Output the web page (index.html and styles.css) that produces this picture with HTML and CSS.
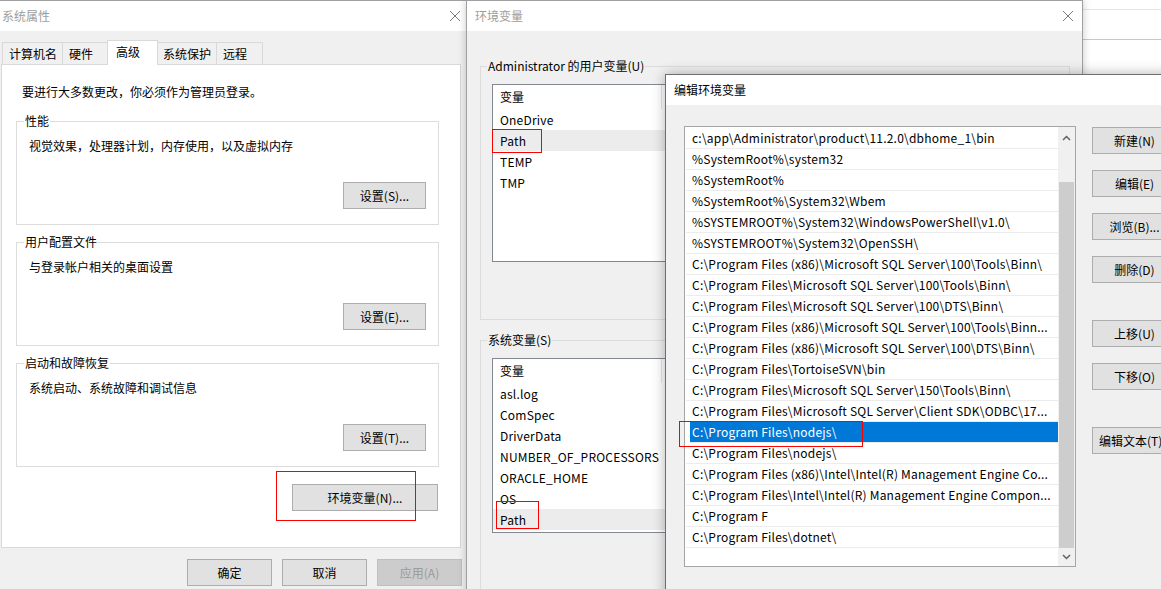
FILE: index.html
```html
<!DOCTYPE html>
<html lang="zh-CN">
<head>
    <meta charset="UTF-8">
    <meta name="viewport" content="width=device-width, initial-scale=1.0">
    <title>编辑环境变量</title>
    <link rel="stylesheet" href="styles.css">
</head>
<body>
<div class="desktop">
    <div class="bg-window">
        <div class="bg-line light"></div>
        <div class="bg-line dark"></div>
    </div>

    <!-- 系统属性 -->
    <div class="window sys-window">
        <div class="titlebar">
            <span class="title">系统属性</span>
            <svg class="close" viewBox="0 0 10 10"><path d="M0 0L10 10M10 0L0 10"/></svg>
        </div>
        <div class="tabs">
            <span class="tab">计算机名</span>
            <span class="tab">硬件</span>
            <span class="tab active">高级</span>
            <span class="tab">系统保护</span>
            <span class="tab">远程</span>
        </div>
        <div class="tab-panel">
            <p class="note">要进行大多数更改，你必须作为管理员登录。</p>
            <fieldset class="group">
                <legend>性能</legend>
                <p class="desc">视觉效果，处理器计划，内存使用，以及虚拟内存</p>
                <button class="btn group-btn">设置(S)...</button>
            </fieldset>
            <fieldset class="group">
                <legend>用户配置文件</legend>
                <p class="desc">与登录帐户相关的桌面设置</p>
                <button class="btn group-btn">设置(E)...</button>
            </fieldset>
            <fieldset class="group">
                <legend>启动和故障恢复</legend>
                <p class="desc">系统启动、系统故障和调试信息</p>
                <button class="btn group-btn">设置(T)...</button>
            </fieldset>
            <button class="btn env-btn">环境变量(N)...</button>
        </div>
        <div class="dialog-buttons">
            <button class="btn dialog-btn">确定</button>
            <button class="btn dialog-btn">取消</button>
            <button class="btn dialog-btn" disabled>应用(A)</button>
        </div>
    </div>

    <!-- 环境变量 -->
    <div class="window env-window">
        <div class="titlebar">
            <span class="title">环境变量</span>
            <svg class="close" viewBox="0 0 10 10"><path d="M0 0L10 10M10 0L0 10"/></svg>
        </div>
        <div class="env-body">
            <fieldset class="group env-group">
                <legend>Administrator 的用户变量(U)</legend>
                <div class="listview user-list">
                    <div class="lv-header"><span class="lv-col">变量</span></div>
                    <div class="lv-row">OneDrive</div>
                    <div class="lv-row selected">Path</div>
                    <div class="lv-row">TEMP</div>
                    <div class="lv-row">TMP</div>
                </div>
            </fieldset>
            <fieldset class="group env-group sys-group">
                <legend>系统变量(S)</legend>
                <div class="listview sys-list">
                    <div class="lv-header"><span class="lv-col">变量</span></div>
                    <div class="lv-row">asl.log</div>
                    <div class="lv-row">ComSpec</div>
                    <div class="lv-row">DriverData</div>
                    <div class="lv-row">NUMBER_OF_PROCESSORS</div>
                    <div class="lv-row">ORACLE_HOME</div>
                    <div class="lv-row">OS</div>
                    <div class="lv-row selected">Path</div>
                </div>
            </fieldset>
        </div>
    </div>

    <!-- 编辑环境变量 -->
    <div class="window edit-window">
        <div class="titlebar">
            <span class="title active-title">编辑环境变量</span>
        </div>
        <div class="edit-body">
            <div class="listbox">
                <div class="items">
                    <div class="item">c:\app\Administrator\product\11.2.0\dbhome_1\bin</div>
                    <div class="item">%SystemRoot%\system32</div>
                    <div class="item">%SystemRoot%</div>
                    <div class="item">%SystemRoot%\System32\Wbem</div>
                    <div class="item">%SYSTEMROOT%\System32\WindowsPowerShell\v1.0\</div>
                    <div class="item">%SYSTEMROOT%\System32\OpenSSH\</div>
                    <div class="item">C:\Program Files (x86)\Microsoft SQL Server\100\Tools\Binn\</div>
                    <div class="item">C:\Program Files\Microsoft SQL Server\100\Tools\Binn\</div>
                    <div class="item">C:\Program Files\Microsoft SQL Server\100\DTS\Binn\</div>
                    <div class="item">C:\Program Files (x86)\Microsoft SQL Server\100\Tools\Binn...</div>
                    <div class="item">C:\Program Files (x86)\Microsoft SQL Server\100\DTS\Binn\</div>
                    <div class="item">C:\Program Files\TortoiseSVN\bin</div>
                    <div class="item">C:\Program Files\Microsoft SQL Server\150\Tools\Binn\</div>
                    <div class="item">C:\Program Files\Microsoft SQL Server\Client SDK\ODBC\17...</div>
                    <div class="item selected">C:\Program Files\nodejs\</div>
                    <div class="item">C:\Program Files\nodejs\</div>
                    <div class="item">C:\Program Files (x86)\Intel\Intel(R) Management Engine Co...</div>
                    <div class="item">C:\Program Files\Intel\Intel(R) Management Engine Compon...</div>
                    <div class="item">C:\Program F</div>
                    <div class="item">C:\Program Files\dotnet\</div>
                </div>
                <div class="scrollbar">
                    <div class="arrow up"><svg viewBox="0 0 9 6"><polyline points="1,5 4.5,1.5 8,5"/></svg></div>
                    <div class="thumb"></div>
                    <div class="arrow down"><svg viewBox="0 0 9 6"><polyline points="1,1 4.5,4.5 8,1"/></svg></div>
                </div>
            </div>
            <div class="side-buttons">
                <button class="btn side-btn">新建(N)</button>
                <button class="btn side-btn">编辑(E)</button>
                <button class="btn side-btn">浏览(B)...</button>
                <button class="btn side-btn">删除(D)</button>
                <button class="btn side-btn spaced">上移(U)</button>
                <button class="btn side-btn">下移(O)</button>
                <button class="btn side-btn spaced edit-text-btn">编辑文本(T)</button>
            </div>
        </div>
    </div>

    <!-- annotations -->
    <div class="mark mark-env"></div>
    <div class="mark mark-user-path"></div>
    <div class="mark mark-sys-path"></div>
    <div class="mark mark-node"></div>
</div>
</body>
</html>
```

FILE: styles.css
```css
* {
    box-sizing: border-box;
}
body {
    margin: 0;
    font-family: "Noto Sans CJK SC", sans-serif;
    font-size: 12px;
    color: #000;
    background: #fff;
}
.desktop {
    position: relative;
    width: 1161px;
    height: 589px;
    overflow: hidden;
    background: #fff;
}
p {
    margin: 0;
}

/* window behind, top right */
.bg-window {
    position: absolute;
    left: 1070px;
    top: 0;
    width: 120px;
    height: 90px;
    background: #fff;
    padding-top: 9px;
}
.bg-line {
    height: 1px;
}
.bg-line.light {
    background: #e6e6e6;
}
.bg-line.dark {
    margin-top: 29px;
    background: #c8c8c8;
}

/* windows */
.window {
    position: absolute;
    background: #f0f0f0;
    border: 1px solid #a0a0a0;
    overflow: hidden;
}
.titlebar {
    height: 30px;
    background: #fff;
    display: flex;
    align-items: center;
    justify-content: space-between;
}
.title {
    line-height: 16px;
    color: #9d9d9d;
}
.title.active-title {
    color: #000;
}
.close {
    width: 10px;
    height: 10px;
    stroke: #7a7a7a;
    stroke-width: 1;
    fill: none;
}

.btn {
    font: inherit;
    height: 27px;
    padding: 0;
    background: #e1e1e1;
    border: 1px solid #adadad;
    color: #000;
    line-height: 25px;
    white-space: nowrap;
}
.btn:disabled {
    background: #cccccc;
    border-color: #bfbfbf;
    color: #9a9a9a;
}

/* group boxes */
.group {
    margin: 10px 0 0;
    min-width: 0;
    border: 1px solid #dcdcdc;
}
.group legend {
    padding: 0 1px;
    line-height: 14px;
}

/* 系统属性 */
.sys-window {
    left: -1px;
    top: 0;
    width: 478px;
    height: 600px;
}
.sys-window .titlebar {
    padding: 0 16px 0 2px;
}
.tabs {
    display: flex;
    align-items: flex-end;
    padding: 9px 0 0 2px;
}
.tab {
    position: relative;
    min-width: 47px;
    height: 22px;
    padding: 0 5px 0 6px;
    line-height: 21px;
    border: 1px solid #d9d9d9;
    border-bottom: none;
    margin-left: -1px;
    background: #f0f0f0;
}
.tab:first-child {
    margin-left: 0;
}
.tab.active {
    z-index: 1;
    min-width: 51px;
    height: 25px;
    margin: 0 -2px -1px -2px;
    padding: 0 5px 0 8px;
    line-height: 22px;
    background: #fff;
}
.tab.active + .tab {
    margin-left: 0;
}
.tab-panel {
    width: 460px;
    height: 484px;
    margin-left: 1px;
    padding: 19px 21px 0 14px;
    background: #fff;
    border: 1px solid #d9d9d9;
    display: flex;
    flex-direction: column;
}
.note {
    margin-left: 6px;
    line-height: 16px;
}
.tab-panel .group {
    padding: 10px 12px 15px 7px;
}
.tab-panel .group:first-of-type {
    margin-top: 14px;
}
.desc {
    margin-left: 5px;
    line-height: 16px;
}
.group-btn {
    display: block;
    width: 83px;
    margin: 28px 0 0 auto;
}
.env-btn {
    align-self: flex-end;
    width: 146px;
    margin: 17px 1px 0 0;
}
.dialog-buttons {
    display: flex;
    justify-content: flex-end;
    gap: 10px;
    margin-top: 11px;
    padding-right: 14px;
}
.dialog-btn {
    width: 85px;
}

/* 环境变量 */
.env-window {
    left: 466px;
    top: 0;
    width: 617px;
    height: 620px;
    box-shadow: 0 0 8px rgba(0, 0, 0, 0.22);
}
.env-window .titlebar {
    padding: 0 9px 0 8px;
}
.env-body {
    padding: 28px 0 0 13px;
}
.env-group {
    width: 590px;
    margin-top: 0;
    padding: 11px 10px 57px 6px;
}
.sys-group {
    margin-top: 13px;
}
.listview {
    margin-left: 5px;
    width: 560px;
    background: #fff;
    border: 1px solid #828790;
    overflow: hidden;
}
.user-list {
    height: 178px;
}
.sys-list {
    height: 175px;
}
.lv-header {
    display: flex;
    height: 24px;
    line-height: 24px;
}
.lv-col {
    width: 169px;
    padding-left: 7px;
    border-right: 1px solid #e5e5e5;
}
.lv-row {
    height: 21px;
    line-height: 21px;
    padding-left: 7px;
    white-space: nowrap;
    letter-spacing: 0.2px;
}
.lv-row.selected {
    background: #ececec;
}

/* 编辑环境变量 */
.edit-window {
    left: 665px;
    top: 74px;
    width: 530px;
    height: 540px;
    border-color: #6e6e6e;
    box-shadow: 0 0 12px rgba(0, 0, 0, 0.3);
}
.edit-window .titlebar {
    padding-left: 8px;
}
.edit-body {
    display: flex;
    gap: 16px;
    padding: 21px 0 0 18px;
}
.listbox {
    display: flex;
    width: 392px;
    height: 441px;
    background: #fff;
    border: 1px solid #a5a5a5;
}
.items {
    flex: 1;
    min-width: 0;
    padding: 1px 0 0 1px;
    overflow: hidden;
}
.item {
    height: 21px;
    line-height: 20px;
    padding-left: 6px;
    border-bottom: 1px solid #ececec;
    white-space: nowrap;
    overflow: hidden;
    letter-spacing: 0.22px;
}
.item.selected {
    margin-left: 4px;
    padding-left: 2px;
    background: #0078d7;
    color: #fff;
}
.scrollbar {
    width: 17px;
    background: #f0f0f0;
    display: flex;
    flex-direction: column;
}
.arrow {
    display: flex;
    align-items: center;
    justify-content: center;
}
.arrow svg {
    width: 9px;
    height: 6px;
    fill: none;
    stroke: #606060;
    stroke-width: 1.5;
}
.arrow.up {
    height: 21px;
}
.arrow.down {
    height: 18px;
}
.thumb {
    flex: 1;
    margin: 34px 1px 0;
    background: #cdcdcd;
}
.side-buttons {
    display: flex;
    flex-direction: column;
    padding-top: 1px;
}
.side-btn {
    width: 85px;
    margin-bottom: 16px;
}
.side-btn.spaced {
    margin-top: 21px;
}
.edit-text-btn {
    text-align: left;
    padding-left: 6px;
}

/* red annotation boxes */
.mark {
    position: absolute;
    border: 1px solid #f00;
    z-index: 10;
}
.mark-env {
    left: 276px;
    top: 471px;
    width: 140px;
    height: 50px;
}
.mark-user-path {
    left: 492px;
    top: 129px;
    width: 50px;
    height: 24px;
}
.mark-sys-path {
    left: 496px;
    top: 501px;
    width: 43px;
    height: 28px;
}
.mark-node {
    left: 679px;
    top: 421px;
    width: 184px;
    height: 26px;
}
```
